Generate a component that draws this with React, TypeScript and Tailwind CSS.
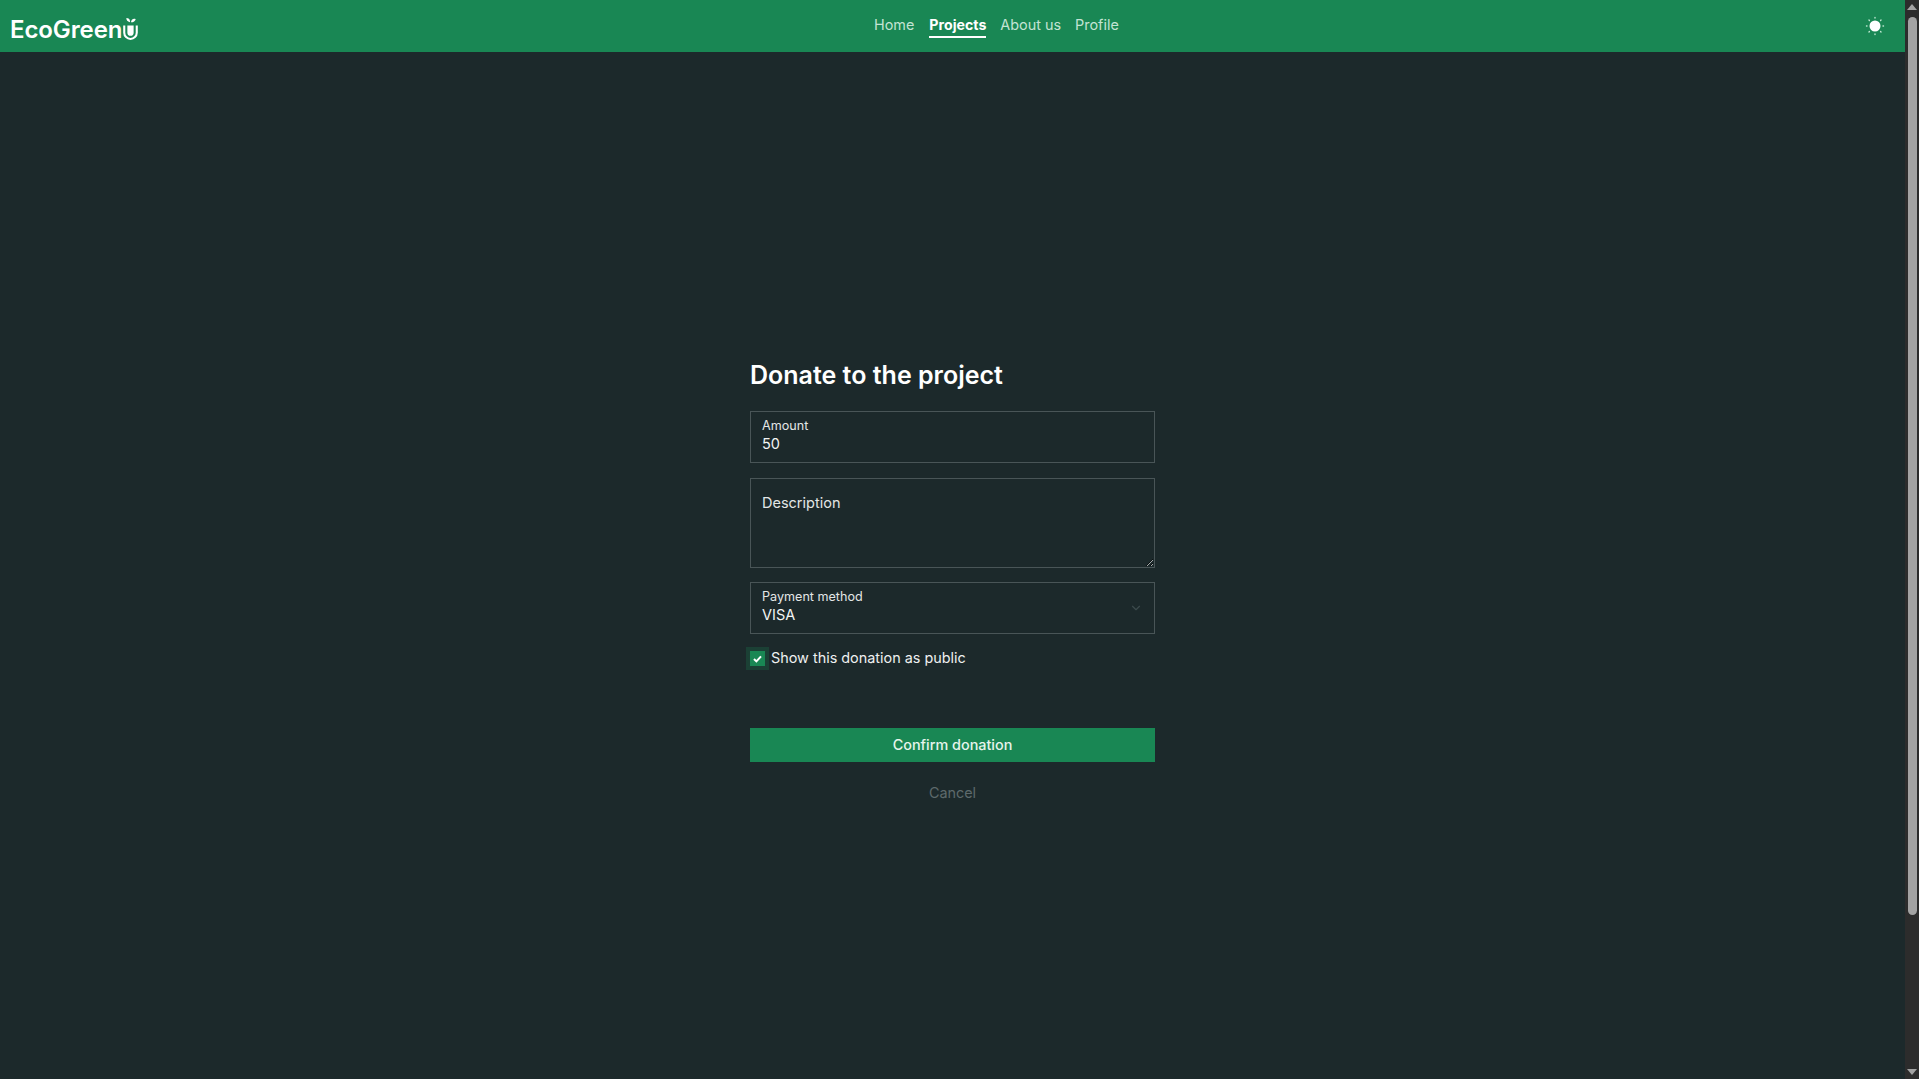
import { ChevronDown } from "lucide-react";

function Logo() {
  return (
    <div className="w-[864px] shrink-0 flex items-start">
      <span className="text-[24px] leading-[30px] font-semibold tracking-[-0.1px] text-white mt-[15px]">EcoGreen</span>
      <svg width="17" height="25" viewBox="0 0 16 24" className="mt-[16px]">
        <path d="M2 9v7a6 6 0 0 0 12 0V9" fill="none" stroke="#fff" strokeWidth="2" />
        <path d="M5 9h6v7a3 3 0 0 1-6 0z" fill="#fff" />
        <path d="M7.500 8V5C7.500 3 6 2 4 2c0 2 1 3.500 3.500 4zM8.500 6c0-2 2-4 4.500-3-.6 2-2 3-4.500 3z" fill="#fff" />
      </svg>
    </div>
  );
}

function Sun() {
  return (
    <svg width="20" height="20" viewBox="0 0 20 20">
      <circle cx="10" cy="10" r="5.500" fill="#fff" />
      <g stroke="#bfe8d2" strokeWidth="1.400" strokeLinecap="round">
        <path d="M10 1.500v.5M10 18v.5M1.500 10H2M18 10h.5M4 4l.4.4M15.600 15.600l.4.4M4 16l.4-.4M15.600 4.400l.4-.4" />
      </g>
    </svg>
  );
}

function Scrollbar() {
  return (
    <div className="w-[14px] shrink-0 bg-[#2c2c2c] flex flex-col items-center">
      <svg width="10" height="6" viewBox="0 0 10 6" className="mt-[4px] shrink-0">
        <path d="M5 0l5 6H0z" fill="#a3a3a3" />
      </svg>
      <div className="w-[9px] h-[898px] mt-[7px] rounded-[5px] bg-[#a3a3a3]" />
      <svg width="10" height="6" viewBox="0 0 10 6" className="mt-auto mb-[4px] shrink-0">
        <path d="M5 6L0 0h10z" fill="#a3a3a3" />
      </svg>
    </div>
  );
}

function Field({ label, value, arrow }: { label: string; value: string; arrow?: boolean }) {
  return (
    <div className="h-[52px] border border-[#495557] pl-[11px] pr-[11px] flex items-center justify-between">
      <div className="flex flex-col pb-[3px]">
        <span className="text-[12.6px] leading-[16px] text-[#e3e6e6]">{label}</span>
        <span className="text-[14.5px] leading-[19px] text-[#f2f4f4]">{value}</span>
      </div>
      {arrow && <ChevronDown size={14} className="text-[#3c4a4c]" />}
    </div>
  );
}

export default function App() {
  return (
    <div className="h-screen flex overflow-hidden bg-[#1c292b] font-['Inter',sans-serif]">
      <div className="flex-1 flex flex-col">
        <nav className="h-[52px] shrink-0 bg-[#198754] flex items-start pl-[10px] pr-[20px]">
          <Logo />
          <div className="flex items-center gap-[14px] h-[40px] mt-[5px] text-[14.4px]">
            <a className="text-[#c3e3d3]">Home</a>
            <a className="ml-[1px] text-[14.2px] text-white font-bold border-b-2 border-white leading-[20px] mt-[3px] pb-[1px]">Projects</a>
            <a className="text-[#c3e3d3]">About us</a>
            <a className="text-[#c3e3d3]">Profile</a>
          </div>
          <div className="ml-auto mt-[16px]">
            <Sun />
          </div>
        </nav>
        <main className="w-[405px] mx-auto pt-[306px] flex flex-col">
          <h1 className="text-[25px] leading-[34px] font-semibold text-white mb-[19px]">Donate to the project</h1>
          <Field label="Amount" value="50" />
          <textarea
            placeholder="Description"
            className="h-[90px] mt-[15px] border border-[#495557] bg-transparent pl-[11px] pt-[14px] text-[14.5px] leading-[20px] placeholder:text-[#e3e6e6] outline-none"
          />
          <div className="mt-[14px]">
            <Field label="Payment method" value="VISA" arrow />
          </div>
          <label className="flex items-center gap-[6px] mt-[14px] h-[21px] text-[14.4px] text-[#eef0f0]">
            <span className="w-[15px] h-[15px] bg-[#198754] ring-4 ring-[#19875440] flex items-center justify-center">
              <svg width="9" height="8" viewBox="0 0 9 8">
                <path d="M1 4l2.400 2.400L8 1.400" fill="none" stroke="#fff" strokeWidth="2" />
              </svg>
            </span>
            <span className="-mt-[1px]">Show this donation as public</span>
          </label>
          <button className="mt-[59px] h-[34px] bg-[#198754] text-[14.4px] font-medium text-[#e6f4ec]">Confirm donation</button>
          <button className="mt-[20px] h-[22px] text-[14.4px] text-[#5e6a6c]">Cancel</button>
        </main>
      </div>
      <Scrollbar />
    </div>
  );
}
